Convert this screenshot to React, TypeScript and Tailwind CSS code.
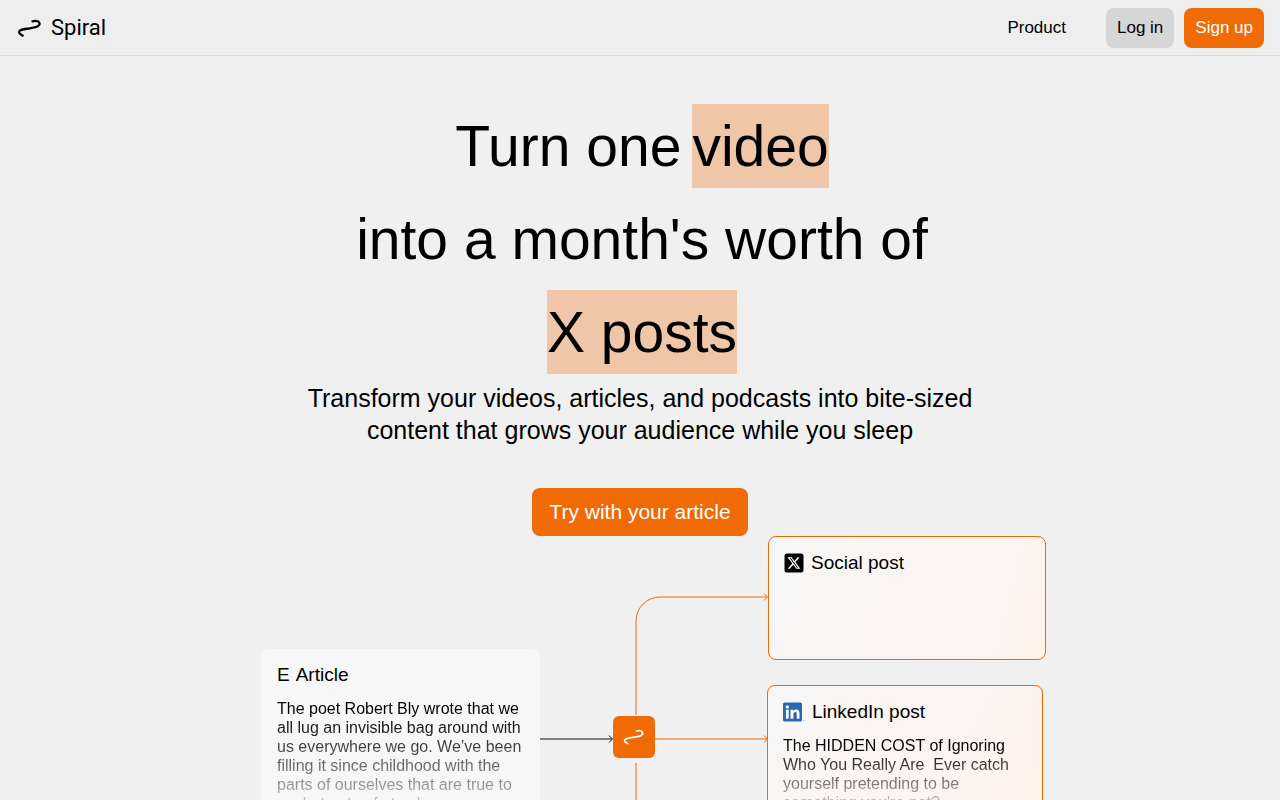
import type { ReactNode } from "react";

const spiralPath =
  "M15.500 2.300C19.500 1.200 23 2.300 22.600 5.200C22.200 8.300 17.500 8.500 13 9.300C7.500 10.200 2.200 10.200 2 13C1.900 14.900 3.800 15.600 5.600 16.600";

function SpiralMark({ className }: { className?: string }) {
  return (
    <svg viewBox="0 0 24 18" fill="none" aria-hidden="true" className={className}>
      <path d={spiralPath} stroke="currentColor" strokeWidth="2.300" strokeLinecap="round" />
    </svg>
  );
}

function XLogo() {
  return (
    <svg width="20" height="20" viewBox="0 0 20 20" aria-hidden="true">
      <rect x="0.500" y="0.500" width="19" height="19" rx="2.500" fill="#000" />
      <g transform="translate(2.700 2.800) scale(.6)">
        <path
          fill="#fff"
          d="M18.244 2.250h3.308l-7.227 8.260 8.502 11.240H16.170l-5.214-6.817L4.990 21.750H1.680l7.730-8.835L1.254 2.250H8.080l4.713 6.231zm-1.161 17.520h1.833L7.084 4.126H5.117z"
        />
      </g>
    </svg>
  );
}

function LinkedInLogo() {
  return (
    <svg width="22" height="20" viewBox="0 0 22 20" aria-hidden="true">
      <rect y="0.500" width="19" height="19" rx="1.500" fill="#2867b2" />
      <g fill="#fff">
        <circle cx="4.300" cy="5" r="1.700" />
        <path d="M2.900 7.700h2.800v9H2.900z" />
        <path d="M7.500 7.700h2.700v1.300c.4-.8 1.400-1.500 2.800-1.500 2.900 0 3.500 1.900 3.500 4.300v4.900h-2.800v-4.400c0-1 0-2.400-1.500-2.400s-1.800 1.100-1.800 2.300v4.500H7.500z" />
      </g>
      <circle cx="20.500" cy="18.500" r="0.700" fill="#a9c3e0" />
    </svg>
  );
}

function Highlight({ children }: { children: ReactNode }) {
  return <span className="bg-[#f0c6a9]">{children}</span>;
}

function Connectors() {
  return (
    <svg width="228" height="420" viewBox="0 0 228 420" fill="none" aria-hidden="true" className="shrink-0">
      <g stroke="#ef6905">
        <path d="M96 179V85A24 24 0 0 1 120 61H227" />
        <path d="M224 57.500l3.500 3.500-3.500 3.500" />
        <path d="M115 203H227" />
        <path d="M224 199.500l3.500 3.500-3.500 3.500" />
        <path d="M96 227V420" />
      </g>
      <g stroke="#111">
        <path d="M0 203H72" />
        <path d="M69 199.500l3.500 3.500-3.500 3.500" />
      </g>
      <rect x="73" y="180" width="42" height="42" rx="6" fill="#f06a06" />
      <g transform="translate(82.800 193) scale(.88)">
        <path d={spiralPath} stroke="#fff" strokeWidth="2" strokeLinecap="round" />
      </g>
    </svg>
  );
}

export default function App() {
  return (
    <div className="min-h-screen bg-[#f0f0f0] font-['Liberation_Sans',sans-serif] text-black">
      <header className="flex h-14 items-center justify-between border-b border-[#d9d9d9] bg-[#eeeeee] px-4">
        <a href="#" className="flex items-center gap-2.5 pl-px">
          <SpiralMark className="h-[18px] w-6" />
          <span className="font-['Roboto',sans-serif] text-[22px] leading-7">Spiral</span>
        </a>
        <nav className="flex items-center gap-2.5">
          <a href="#" className="mr-[30px] text-[17px]">Product</a>
          <button type="button" className="h-10 rounded-lg bg-[#d6d6d6] px-[11px] text-[17px]">Log in</button>
          <button type="button" className="h-10 rounded-lg bg-[#f06a06] px-[11px] text-[17px] text-white">
            Sign up
          </button>
        </nav>
      </header>

      <main>
        <section className="flex flex-col items-center pt-12 text-center">
          <h1 className="flex flex-col items-center gap-[9px] pl-1 text-[57px] leading-[84px]">
            <span className="flex gap-[11px]">
              <span>Turn one</span> <Highlight>video</Highlight>
            </span>
            <span>into a month's worth of</span>
            <Highlight>X posts</Highlight>
          </h1>
          <p className="mt-2 max-w-[704px] text-[25px] leading-8">
            Transform your videos, articles, and podcasts into bite-sized content that grows your audience while you
            sleep
          </p>
          <button type="button" className="mt-[42px] h-12 rounded-lg bg-[#f06a06] px-[17px] text-[21px] text-white">
            Try with your article
          </button>
        </section>

        <section className="flex items-start justify-center pl-[27px]">
          <article className="mt-[113px] w-[279px] shrink-0 rounded-lg bg-[#f7f7f7] px-4 py-3">
            <h2 className="flex gap-1.5 text-[19px] leading-7">
              <span>E</span>Article
            </h2>
            <p className="mt-2.5 -mr-2 bg-linear-to-b from-black to-[#f7f7f7] to-[125px] bg-clip-text text-[16px] leading-[19px] text-transparent">
              The poet Robert Bly wrote that we all lug an invisible bag around with us everywhere we go. We’ve been
              filling it since childhood with the parts of ourselves that are true to us, but not safe to show.
            </p>
          </article>

          <Connectors />

          <div className="flex w-[278px] shrink-0 flex-col gap-[25px]">
            <article className="h-[124px] rounded-lg border border-[#ef6905] bg-linear-105 from-[#f7f7f7] via-[#fdf4f0] via-80% to-[#fff2e8] px-[15px] py-3">
              <h2 className="flex items-center gap-[7px] text-[19px] leading-7">
                <XLogo />Social post
              </h2>
            </article>
            <article className="-ml-px w-[276px] rounded-lg border border-[#ef6905] bg-linear-115 from-[#f7f7f7] via-[#fdf4f0] via-60% to-[#fff2e8] px-[15px] py-3">
              <h2 className="flex items-center gap-[7px] text-[19px] leading-7">
                <LinkedInLogo />LinkedIn post
              </h2>
              <p className="mt-2.5 bg-linear-to-b from-black to-[#fbf5f1] to-[80px] bg-clip-text text-[16px] leading-[19px] whitespace-pre-wrap text-transparent">
                {"The HIDDEN COST of Ignoring Who You Really Are  Ever catch yourself pretending to be something you're not?"}
              </p>
            </article>
          </div>
        </section>
      </main>
    </div>
  );
}
